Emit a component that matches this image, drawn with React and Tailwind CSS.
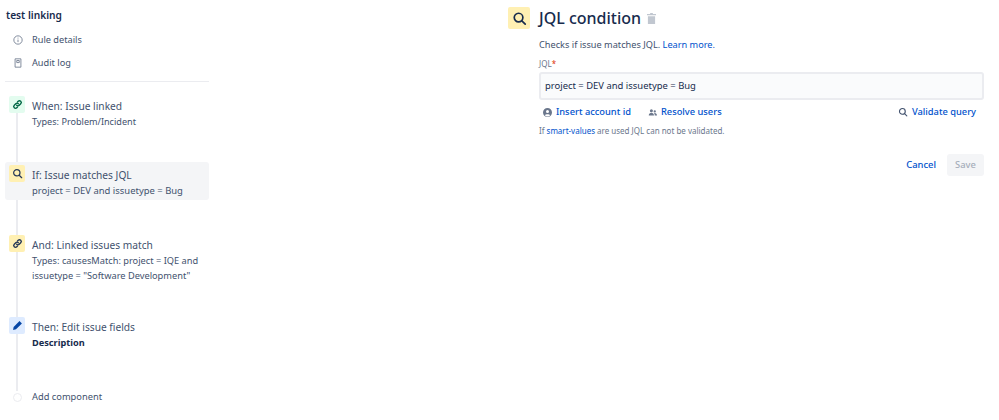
import React from "react";

const Link = ({ className = "" }) => (
  <svg viewBox="0 0 16 16" className={className} fill="none" stroke="currentColor" strokeWidth="2" strokeLinecap="round">
    <path d="M6.8 9.2a2.6 2.6 0 0 0 3.7 0l2.2-2.2a2.6 2.6 0 0 0-3.7-3.7L8 4.3" />
    <path d="M9.2 6.8a2.6 2.6 0 0 0-3.7 0L3.3 9a2.6 2.6 0 0 0 3.700 3.700l1-1" />
  </svg>
);
const Search = ({ className = "" }) => (
  <svg viewBox="0 0 16 16" className={className} fill="none" stroke="currentColor" strokeWidth="1.8" strokeLinecap="round">
    <circle cx="7" cy="7" r="4.6" />
    <path d="M10.5 10.5l3.6 3.6" />
  </svg>
);

function Step({ bg, icon, title, children, className = "", sub = "text-[9.2px]" }) {
  return (
    <div className={`relative flex gap-[7px] rounded-[3px] pl-1 ${className}`}>
      <div className={`flex h-[17px] w-4 shrink-0 items-center justify-center rounded-[2px] ${bg}`}>{icon}</div>
      <div className="min-w-0 whitespace-nowrap pt-[3px] leading-[15px] text-[#42526e]">
        <div className="text-[10.2px] leading-[15px]">{title}</div>
        <div className={sub}>{children}</div>
      </div>
    </div>
  );
}

export default function App() {
  return (
    <div className="flex h-[420px] w-[999px] overflow-hidden bg-white font-['Noto_Sans','Open_Sans',sans-serif] text-[#42526e]">
      <aside className="ml-[5px] w-[204px] shrink-0">
        <div className="pl-[1px] pt-[8px] text-[10.2px] font-semibold leading-[14px] text-[#172b4d]">test linking</div>
        <div className="mt-[11px] flex items-center gap-[9px] pl-[8px] text-[9.2px] leading-[14px]">
          <svg viewBox="0 0 12 12" className="h-[10px] w-[10px] text-[#6b778c]" fill="none" stroke="currentColor">
            <circle cx="6" cy="6" r="5" />
            <path d="M6 5.5v3M6 3.2v1" />
          </svg>
          Rule details
        </div>
        <div className="mt-[9px] flex items-center gap-[9px] pl-[8px] text-[9.2px] leading-[14px]">
          <svg viewBox="0 0 12 12" className="h-[10px] w-[10px] text-[#6b778c]" fill="none" stroke="currentColor">
            <path d="M2.5 1h7v10h-7zM4.5 3h3v2.500h-3z" />
          </svg>
          Audit log
        </div>
        <div className="mt-[11px] h-px bg-[#ebecf0]" />
        <div className="relative mt-[14px]">
          <div className="absolute left-[11px] top-[10px] h-[285px] w-[2px] bg-[#ebecf0]" />
          <Step
            bg="bg-[#e3fcef]"
            icon={<Link className="h-[11px] w-[11px] text-[#006644]" />}
            title="When: Issue linked"
            sub="text-[9.1px]"
          >
            Types: Problem/Incident
          </Step>
          <Step
            className="mt-[33px] h-[38px] bg-[#f4f5f7] pt-[3px]"
            bg="bg-[#fff0b3]"
            icon={<Search className="h-[11px] w-[11px] text-[#253858]" />}
            title="If: Issue matches JQL"
            sub="text-[9.45px]"
          >
            project = DEV and issuetype = Bug
          </Step>
          <Step
            className="mt-[35px]"
            bg="bg-[#fff0b3]"
            icon={<Link className="h-[11px] w-[11px] text-[#253858]" />}
            title="And: Linked issues match"
            sub="text-[9.25px]"
          >
            Types: causesMatch: project = IQE and
            <br />
            issuetype = "Software Development"
          </Step>
          <Step
            className="mt-[34px]"
            bg="bg-[#deebff]"
            icon={
              <svg viewBox="0 0 12 12" className="h-[11px] w-[11px] text-[#0747a6]" fill="currentColor">
                <path d="M8.2 1.2l2.6 2.6-6.4 6.4-3.2.6.6-3.200z" />
              </svg>
            }
            title="Then: Edit issue fields"
          >
            <span className="font-bold text-[#172b4d]">Description</span>
          </Step>
          <div className="relative mt-[40px] flex items-center gap-[10px] pl-[8px] text-[9.3px] leading-[14px]">
            <div className="h-[9px] w-[9px] rounded-full border border-[#ebecf0] bg-white" />
            <span>Add component</span>
          </div>
        </div>
      </aside>
      <main className="ml-[299px] w-[476px] shrink-0">
        <div className="mt-[7px] flex items-center gap-[9px]">
          <div className="flex h-[22px] w-[22px] items-center justify-center rounded-[2px] bg-[#fff0b3]">
            <Search className="h-[15px] w-[15px] text-[#172b4d]" />
          </div>
          <h1 className="text-[16px] font-medium leading-[22px] text-[#172b4d]">JQL condition</h1>
          <svg viewBox="0 0 10 12" className="-ml-[3px] h-[11px] w-[9px] text-[#c1c7d0]" fill="currentColor">
            <path d="M3.5 0h3v1H10v1.500H0V1h3.500zM1 3.500h8V12H1z" />
          </svg>
        </div>
        <div className="ml-[31px]">
          <p className="mt-[9px] text-[9.2px] leading-[14px]">
            Checks if issue matches JQL. <span className="text-[#0052cc]">Learn more.</span>
          </p>
          <div className="mt-[6px] text-[8px] leading-[11px] text-[#6b778c]">
            JQL<span className="text-[#de350b]">*</span>
          </div>
          <div className="mt-[3px] flex h-[28px] items-center rounded-[3px] border-2 border-[#ebecf0] bg-[#fafbfc] pl-[4px] text-[9.45px] text-[#172b4d]">
            project = DEV and issuetype = Bug
          </div>
          <div className="mt-[4px] flex items-center text-[9.3px] font-medium leading-[16px] text-[#0052cc]">
            <svg viewBox="0 0 12 12" className="ml-[4px] mr-[4px] h-[9px] w-[9px] text-[#6b778c]" fill="currentColor">
              <path fillRule="evenodd" d="M6 0a6 6 0 1 1 0 12A6 6 0 0 1 6 0zm0 2.500a2 2 0 1 0 0 4 2 2 0 0 0 0-4zM2.500 9.500a4.500 4.500 0 0 0 7 0C8.500 8 3.500 8 2.500 9.500z" />
            </svg>
            <span>Insert account id</span>
            <svg viewBox="0 0 12 12" className="ml-[17px] mr-[4px] h-[9px] w-[9px] text-[#6b778c]" fill="currentColor">
              <circle cx="4.5" cy="3.5" r="2" />
              <circle cx="9" cy="4.5" r="1.5" />
              <path d="M1 10c0-5 7-5 7 0zM9 10c0-1.500-.3-2.500-1-3.300 2-.7 4 .6 4 3.300z" />
            </svg>
            <span>Resolve users</span>
            <Search className="ml-auto mr-[4px] h-[10px] w-[10px] text-[#42526e]" />
            <span className="mr-[8px]">Validate query</span>
          </div>
          <p className="mt-[5px] text-[8px] leading-[12px] text-[#6b778c]">
            If <span className="text-[#0052cc]">smart-values</span> are used JQL can not be validated.
          </p>
          <div className="mt-[17px] flex items-center justify-end gap-[11px] text-[9.4px] font-medium">
            <span className="text-[#0052cc]">Cancel</span>
            <button className="h-[22px] w-[37px] rounded-[3px] bg-[#f4f5f7] text-[#a5adba]">Save</button>
          </div>
        </div>
      </main>
    </div>
  );
}
